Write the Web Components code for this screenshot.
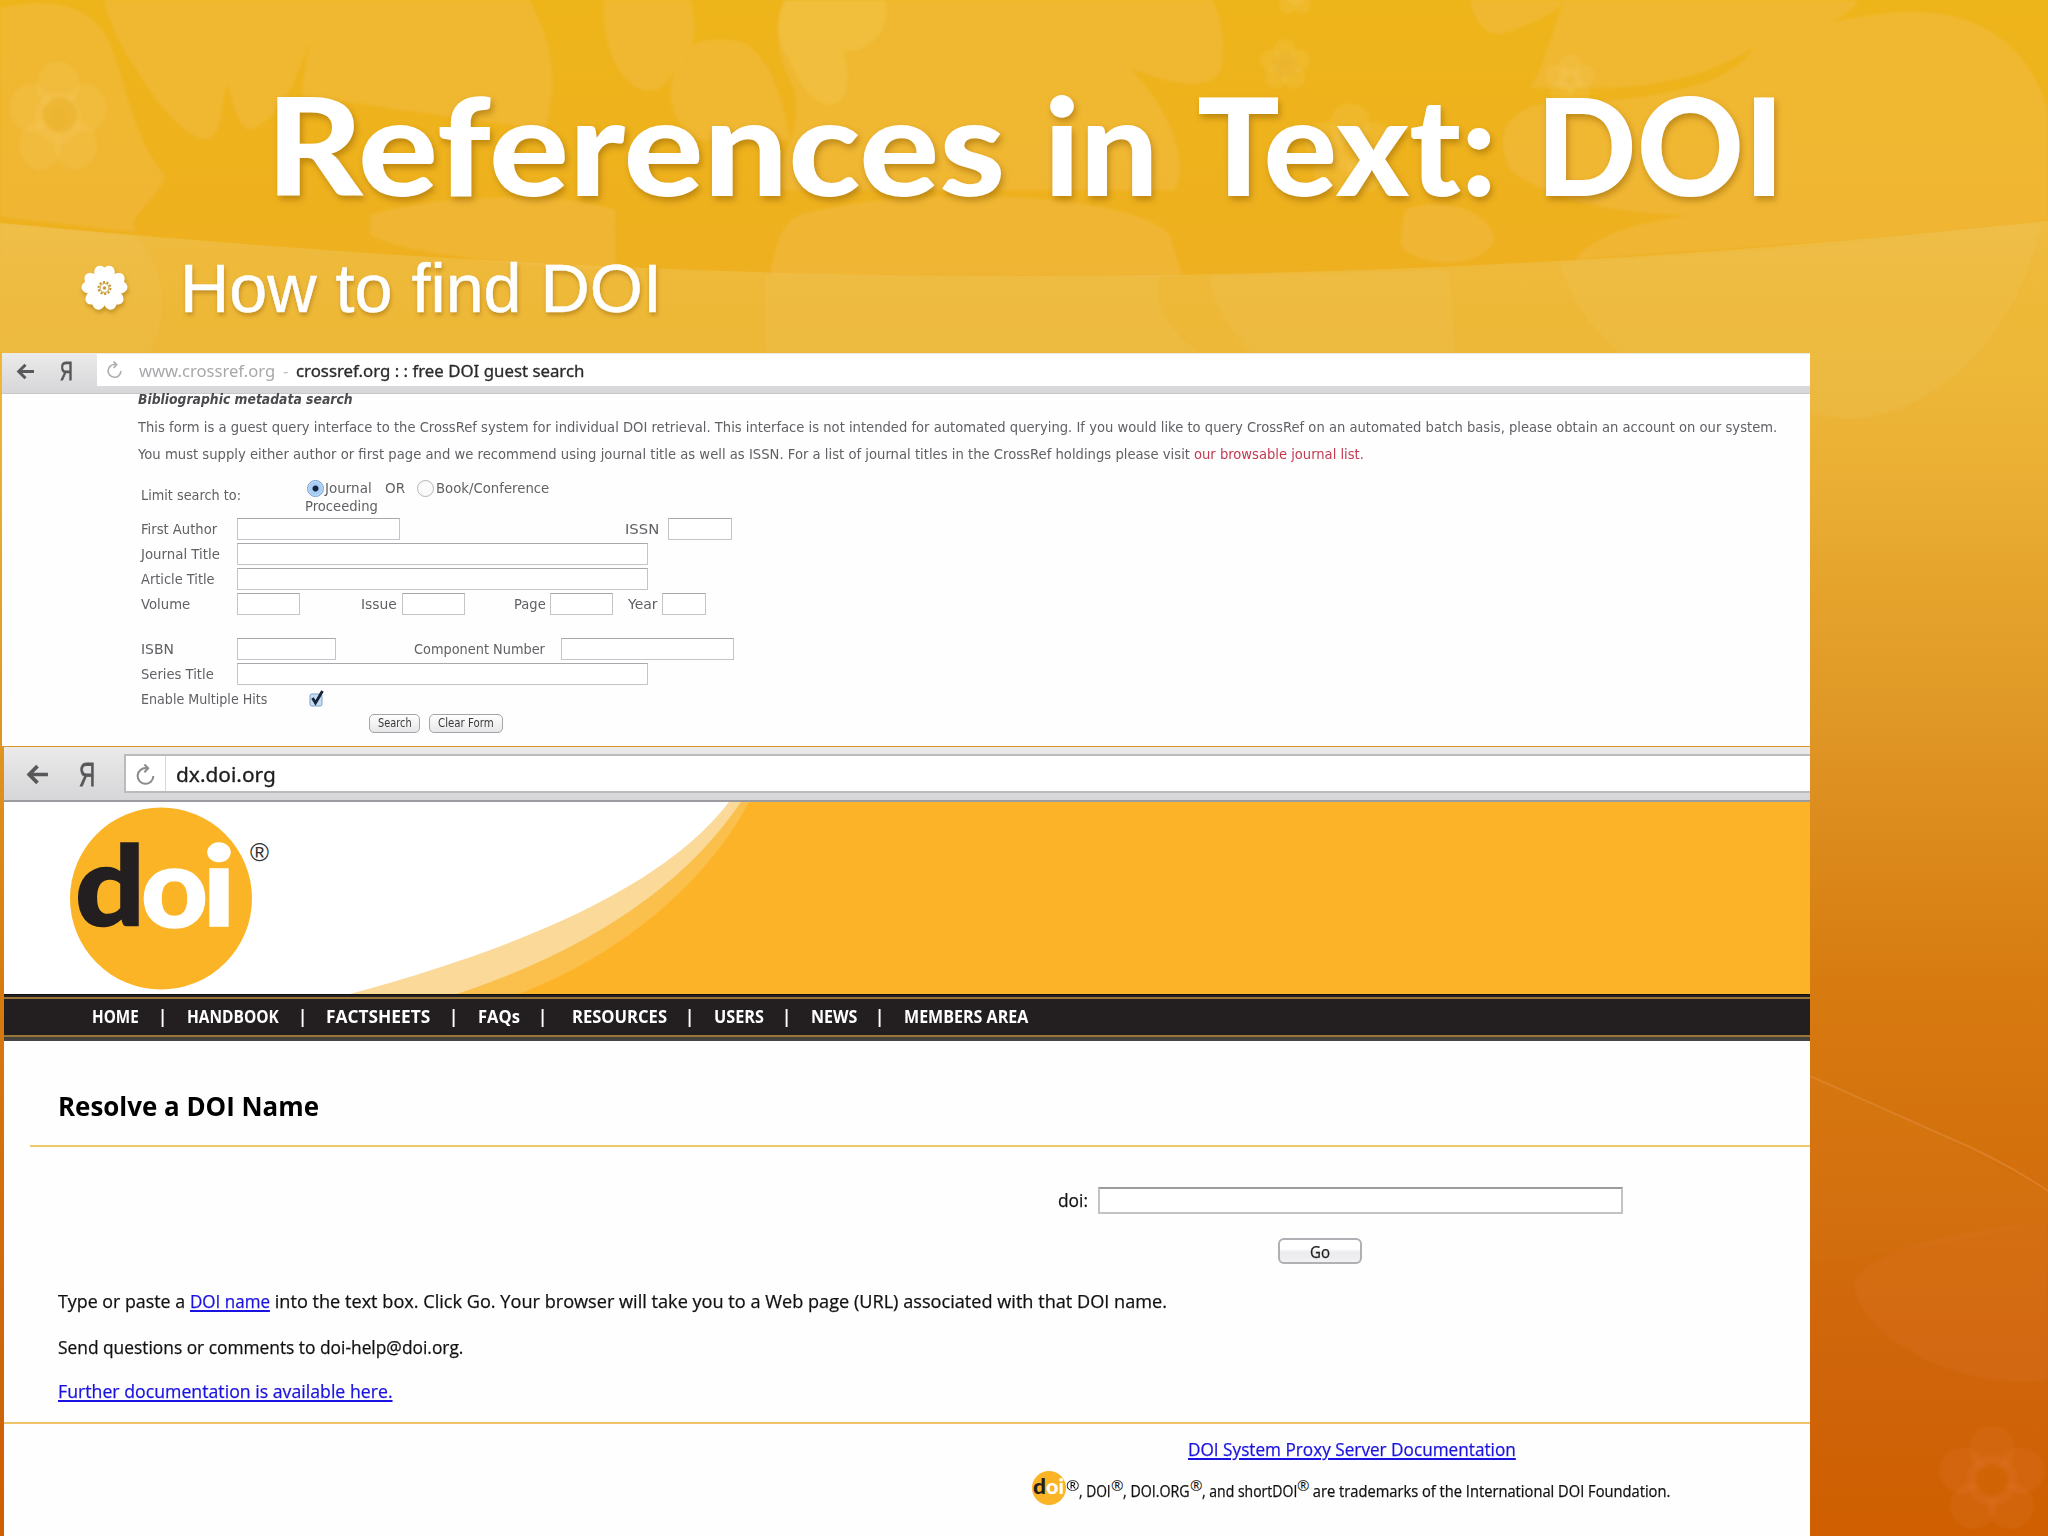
<!DOCTYPE html>
<html lang="en">
<head>
    <meta charset="UTF-8" />
    <meta name="viewport" content="width=device-width, initial-scale=1.0" />
    <title>References in Text: DOI</title>
    <style>
        body {
            margin: 0;
            overflow: hidden;
            font-family: "Open Sans", sans-serif;
        }
    </style>
</head>

<body>
<slide-page>
    <slide-title slot="title">
        <fit-text w="739">References</fit-text>
        <fit-text w="114">in</fit-text>
        <fit-text w="300">Text:</fit-text>
        <fit-text w="248">DOI</fit-text>
    </slide-title>
    <slide-bullet slot="bullet"><fit-text w="482">How to find DOI</fit-text></slide-bullet>

    <browser-shot class="crossref">
        <address-bar slot="bar" class="small">
            <fit-text w="136" style="color:#a9a7aa">www.crossref.org</fit-text>
            <span style="color:#bbb; width:21px; text-align:center">-</span>
            <fit-text w="288" style="-webkit-text-stroke:.3px">crossref.org : : free DOI guest search</fit-text>
        </address-bar>
        <crossref-form></crossref-form>
    </browser-shot>

    <browser-shot class="doi">
        <address-bar slot="bar" class="large"><fit-text w="100">dx.doi.org</fit-text></address-bar>
        <doi-banner></doi-banner>
        <doi-nav></doi-nav>
        <doi-resolver></doi-resolver>
        <doi-footer></doi-footer>
    </browser-shot>
</slide-page>

<script type="module">
    class Base extends HTMLElement {
        constructor() {
            super();
            this.attachShadow({ mode: 'open' });
            this.shadowRoot.innerHTML = this.render();
        }
    }

    // one line of text stretched to a given width
    class FitText extends Base {
        render() {
            return `
                <style>
                    :host { display: block; white-space: nowrap; flex: none; }
                    span { display: inline-block; transform-origin: 0 50%; }
                </style>
                <span><slot></slot></span>`;
        }

        connectedCallback() {
            const w = Number(this.getAttribute('w'));
            const span = this.shadowRoot.querySelector('span');
            this.style.width = w + 'px';
            const natural = span.offsetWidth;
            if (natural) span.style.transform = `scaleX(${w / natural})`;
        }
    }

    class SlidePage extends Base {
        render() {
            return `
                <style>
                    :host { display: block; position: relative; width: 2048px; height: 1536px; overflow: hidden; }
                    .bg { position: absolute; inset: 0; }
                    .soft { filter: blur(1.5px); }
                    main { position: relative; display: flex; flex-direction: column; }
                </style>
                <svg class="bg" width="2048" height="1536" viewBox="0 0 2048 1536">
                    <defs>
                        <linearGradient id="g" x1="0" y1="0" x2="0" y2="1">
                            <stop offset="0" stop-color="#eeb51a"/>
                            <stop offset=".17" stop-color="#eeb01f"/>
                            <stop offset=".24" stop-color="#ecb22c"/>
                            <stop offset=".34" stop-color="#e8a92f"/>
                            <stop offset=".44" stop-color="#e19c28"/>
                            <stop offset=".54" stop-color="#dc8b1d"/>
                            <stop offset=".64" stop-color="#d77b10"/>
                            <stop offset=".78" stop-color="#d26e0c"/>
                            <stop offset=".9" stop-color="#cf640a"/>
                            <stop offset="1" stop-color="#cf5f00"/>
                        </linearGradient>
                        <linearGradient id="band" x1="0" y1="0" x2="0" y2="1">
                            <stop offset="0" stop-color="#f0d080" stop-opacity=".36"/>
                            <stop offset=".12" stop-color="#f0c860" stop-opacity=".3"/>
                            <stop offset=".45" stop-color="#f0c860" stop-opacity="0"/>
                        </linearGradient>
                        <g id="flower">
                            <circle cx="0" cy="-30" r="22"/><circle cx="28" cy="-9" r="22"/>
                            <circle cx="18" cy="25" r="22"/><circle cx="-18" cy="25" r="22"/>
                            <circle cx="-28" cy="-9" r="22"/><circle r="24"/>
                        </g>
                    </defs>
                    <rect width="2048" height="1536" fill="url(#g)"/>
                    <g class="soft" fill="#f3bf5a" fill-opacity=".36">
                        <path d="M0 8C60 -5 88 10 104 32C125 70 132 140 165 175C160 200 125 215 136 232L0 217Z"/>
                        <path d="M104 0C112 35 130 60 140 75C160 110 190 140 208 140C225 132 220 100 228 84C232 105 240 128 250 130C280 120 300 75 309 40C306 70 300 90 303 96L545 130C565 60 540 25 530 0Z"/>
                        <path d="M604 0C600 45 620 88 648 91C670 90 668 75 690 48C698 35 695 15 690 0Z"/>
                        <path d="M690 48C665 70 660 120 700 140L790 140C780 80 765 60 752 48C745 38 700 35 690 48Z"/>
                        <path d="M785 0C772 30 778 60 795 90C800 120 790 160 760 190H1175C1190 160 1170 110 1130 68C1170 84 1215 95 1222 65C1226 30 1218 10 1212 0Z"/>
                        <path d="M1470 0C1475 28 1492 36 1502 34C1530 25 1560 12 1564 0Z"/>
                        <path d="M1564 0C1548 45 1540 75 1530 88L1610 88C1680 85 1730 65 1755 46C1735 80 1680 96 1590 102C1510 95 1490 130 1510 170C1570 215 1680 215 1690 215C1620 225 1590 240 1575 260C1700 250 1900 240 2048 221L2048 110C2030 50 1985 8 1900 12C1860 15 1835 22 1830 22C1850 15 1856 5 1858 0Z"/>
                        <path d="M370 215C430 195 560 190 615 210L616 270C500 265 390 250 370 235Z"/>
                        <path d="M800 215C900 185 1130 190 1170 235L1182 276L770 275C775 240 785 220 800 215Z"/>
                        <path d="M1405 210C1440 195 1490 210 1495 240C1480 275 1400 265 1400 240Z"/>
                    </g>
                    <g class="soft" fill="#f3cc58" fill-opacity=".32">
                        <path d="M785 0C772 20 778 48 790 60C798 90 830 122 845 95C852 75 845 60 843 52C880 50 892 20 885 0Z"/>
                    </g>
                    <g class="soft" fill="#f3cc68" fill-opacity=".2">
                        <use href="#flower" transform="translate(58 118) scale(.98 1.1)"/>
                        <use href="#flower" transform="translate(1285 65) scale(.5)"/>
                        <use href="#flower" transform="translate(1295 -5) scale(.4)"/>
                        <use href="#flower" transform="translate(1350 150) scale(.9)"/>
                        <use href="#flower" transform="translate(1570 80) scale(.5)"/>
                    </g>
                    <g class="soft" fill="#eab02a" fill-opacity=".6">
                        <circle cx="60" cy="115" r="17"/><circle cx="1285" cy="65" r="12"/>
                    </g>
                    <path fill="url(#band)" d="M0 223C420 263 760 277 1050 276C1450 274 1750 252 2048 221V1000H0Z"/>
                    <g class="soft" fill="#f4cf78" fill-opacity=".15">
                        <path d="M0 223L136 236C165 270 170 310 150 352H0Z"/>
                        <path d="M765 275L1160 276C1150 310 1180 340 1200 352H765Z"/>
                        <path d="M1210 276L1450 270L1455 352H1250C1230 330 1210 300 1210 276Z"/>
                        <path d="M1560 262C1750 252 1900 240 2042 222C2020 330 1940 415 1850 419L1700 400C1620 370 1570 310 1560 262Z"/>
                    </g>
                    <path d="M1810 1076L1947 1137C1990 1155 2020 1172 2048 1191" fill="none" stroke="#e08a35" stroke-width="2" stroke-opacity=".6"/>
                    <path d="M1810 1077L1947 1139L2048 1192V1222C1960 1240 1850 1262 1810 1262Z" fill="#e08a35" fill-opacity=".08"/>
                    <g class="soft" fill="#e07830" fill-opacity=".2">
                        <path d="M1855 1282C1860 1255 1950 1230 2048 1222V1380C1960 1395 1850 1330 1855 1282Z"/>
                        <use href="#flower" transform="translate(1992 1480) scale(1.05)"/>
                    </g>
                    <circle class="soft" cx="1992" cy="1480" r="16" fill="#cf6200" fill-opacity=".7"/>
                </svg>
                <main>
                    <slot name="title"></slot>
                    <slot name="bullet"></slot>
                    <slot></slot>
                </main>`;
        }
    }

    class SlideTitle extends Base {
        render() {
            return `
                <style>
                    :host {
                        display: flex; box-sizing: border-box; height: 224px; padding: 64px 0 0 266px; gap: 39px;
                        font: 900 136px/160px Lato, "Open Sans", sans-serif; color: #fff;
                        text-shadow: 2px 4px 6px rgba(130, 85, 0, .45);
                    }
                </style>
                <slot></slot>`;
        }
    }

    class SlideBullet extends Base {
        render() {
            return `
                <style>
                    :host {
                        display: flex; align-items: center; box-sizing: border-box; height: 128px; padding: 0 0 0 81px; gap: 52px;
                        font: 68px/80px "Liberation Sans", sans-serif; color: #fff;
                        -webkit-text-stroke: .5px #fff;
                        text-shadow: 1px 3px 4px rgba(130, 85, 0, .45);
                    }
                    svg { filter: drop-shadow(1px 3px 2px rgba(130, 85, 0, .4)); }
                </style>
                <svg width="47" height="48" viewBox="-23.500 -24 47 48">
                    <g fill="#fff">
                        <g id="p"><path d="M-5 0C-7 -8 -13 -14 -9 -20C-7 -23 -3 -23 0 -20.500C3 -23 7 -23 9 -20C13 -14 7 -8 5 0Z"/></g>
                        <use href="#p" transform="rotate(72)"/><use href="#p" transform="rotate(144)"/>
                        <use href="#p" transform="rotate(216)"/><use href="#p" transform="rotate(288)"/>
                        <circle r="10"/>
                    </g>
                    <circle r="6" fill="none" stroke="#c99a35" stroke-width="2" stroke-dasharray="2.200 1.500"/>
                    <circle r="4.500" fill="none" stroke="#c99a35" stroke-width="1"/>
                    <circle r="1.800" fill="#c99a35"/>
                </svg>
                <slot></slot>`;
        }
    }

    class BrowserShot extends Base {
        render() {
            return `
                <style>
                    :host { display: block; box-sizing: border-box; background: #fefefe; overflow: hidden; }
                    :host(.crossref) { height: 393px; width: 1808px; margin: 1px 0 1px 2px; }
                    :host(.doi) { height: 789px; width: 1806px; margin-left: 4px; }
                </style>
                <slot name="bar"></slot>
                <slot></slot>`;
        }
    }

    class AddressBar extends Base {
        render() {
            return `
                <style>
                    :host { display: flex; box-sizing: border-box; background: linear-gradient(#ebebeb, #d6d5d7); color: #2b2a2c; }
                    :host(.small) { height: 41px; padding: 1px 0 7px; border-bottom: 1px solid #c9c8cb; font: 16px/22px "Noto Sans", sans-serif; }
                    :host(.large) { height: 55px; padding: 7px 0; border-bottom: 2px solid #9c9ca0; font: 19px/26px "Noto Sans", sans-serif; color: #1d1d1d; -webkit-text-stroke: .3px; }
                    nav { display: flex; align-items: center; box-sizing: border-box; flex: none; color: #58575a; }
                    :host(.small) nav { width: 95px; padding: 2px 0 0 14px; gap: 25px; }
                    :host(.large) nav { width: 120px; padding: 2px 0 0 22px; gap: 30px; }
                    .field { flex: 1; display: flex; align-items: center; background: #fff; box-sizing: border-box; padding-top: 1px; }
                    :host(.large) .field { border: 2px solid #bbbbbe; border-right: 0; padding-top: 2px; }
                    .reload { display: flex; align-items: center; justify-content: center; box-sizing: border-box; align-self: stretch; }
                    :host(.small) .reload { width: 42px; padding-right: 8px; margin-right: 0; }
                    :host(.large) .reload { width: 40px; border-right: 1px solid #d8d8d8; margin: -2px 10px 0 0; padding-top: 3px; }
                    :host(.small) .back { width: 19px; height: 17px; }
                    :host(.large) .back { width: 23px; height: 21px; }
                    :host(.small) .reload svg { width: 17px; height: 19px; opacity: .7; }
                    :host(.large) .reload svg { width: 21px; height: 23px; }
                    .ya { font-family: "Liberation Sans", sans-serif; -webkit-text-stroke: .8px; transform: scaleX(.68); transform-origin: 0 50%; }
                    :host(.small) .ya { font-size: 26px; }
                    :host(.large) .ya { font-size: 33px; line-height: 33px; }
                </style>
                <nav>
                    <svg class="back" viewBox="0 0 22 20" fill="none" stroke="currentColor" stroke-width="3.500"><path d="M21 10H3M11 2L3 10L11 18"/></svg>
                    <span class="ya">Я</span>
                </nav>
                <div class="field">
                    <div class="reload">
                        <svg viewBox="0 0 20 22" fill="none" stroke="#8d8d90" stroke-width="2"><path d="M11 4A7.500 7.500 0 1 0 17.500 11.500M9 .5L12.500 4L9 8"/></svg>
                    </div>
                    <slot></slot>
                </div>`;
        }
    }

    class CrossrefForm extends Base {
        render() {
            return `
                <style>
                    :host { display: block; padding-left: 136px; font: 13.500px/19px "DejaVu Sans", sans-serif; color: #626065; }
                    .head { font-weight: 700; font-style: italic; line-height: 10px; height: 12px; color: #4c4a4e; }
                    .line { display: flex; margin-top: 12px; }
                    .line + .line { margin-top: 8px; }
                    .red { color: #c23a50; }
                    .rows { display: flex; flex-direction: column; gap: 3px; padding-left: 3px; margin-top: 15px; }
                    .row { display: grid; align-items: center; height: 22px; }
                    .limit { height: 36px; align-items: start; grid-template-columns: 164px auto; }
                    .opts { display: flex; align-items: center; height: 18px; padding-left: 2px; }
                    .radio { width: 17px; height: 17px; border-radius: 50%; box-sizing: border-box; border: 1px solid #b5b3b9; background: #fafafa; }
                    .on { border-color: #6f9bd0; background: radial-gradient(circle, #14243c 0 2.500px, #a7cdf5 3.500px 6px, #dcebfa 8px); }
                    i { display: block; box-sizing: border-box; height: 22px; margin: 0 1px 0 -1px; border: 1.500px solid #c6c4c9; border-top-color: #a9a7ac; background: #fff; }
                    .btns { display: flex; gap: 9px; padding-left: 228px; margin-top: 1px; }
                    button { box-sizing: border-box; height: 19px; padding: 0; border: 1px solid #a6a4a8; border-radius: 5px; background: linear-gradient(#fff, #e6e6e8); font: 11.500px/17px "DejaVu Sans", sans-serif; color: #39373b; display: flex; justify-content: center; }
                </style>
                <div class="head"><fit-text w="215">Bibliographic metadata search</fit-text></div>
                <div class="line"><fit-text w="1639">This form is a guest query interface to the CrossRef system for individual DOI retrieval. This interface is not intended for automated querying. If you would like to query CrossRef on an automated batch basis, please obtain an account on our system.</fit-text></div>
                <div class="line">
                    <fit-text w="1056">You must supply either author or first page and we recommend using journal title as well as ISSN. For a list of journal titles in the CrossRef holdings please visit&nbsp;</fit-text>
                    <fit-text w="170" class="red">our browsable journal list.</fit-text>
                </div>
                <div class="rows">
                    <div class="row limit">
                        <fit-text w="100" style="margin-top:7px">Limit search to:</fit-text>
                        <div>
                            <div class="opts">
                                <span class="radio on"></span><fit-text w="47" style="margin-left:1px">Journal</fit-text>
                                <fit-text w="20" style="margin:0 12px 0 13px">OR</fit-text>
                                <span class="radio"></span><fit-text w="113" style="margin-left:2px">Book/Conference</fit-text>
                            </div>
                            <fit-text w="73">Proceeding</fit-text>
                        </div>
                    </div>
                    <div class="row" style="grid-template-columns:97px 163px 224px 44px 64px">
                        <fit-text w="76">First Author</fit-text><i></i><span></span><fit-text w="34">ISSN</fit-text><i></i>
                    </div>
                    <div class="row" style="grid-template-columns:97px 411px"><fit-text w="79">Journal Title</fit-text><i></i></div>
                    <div class="row" style="grid-template-columns:97px 411px"><fit-text w="74">Article Title</fit-text><i></i></div>
                    <div class="row" style="grid-template-columns:97px 63px 60px 42px 63px 48px 37px 63px 14px 35px 44px; margin-bottom:20px">
                        <fit-text w="49">Volume</fit-text><i></i><span></span>
                        <fit-text w="36">Issue</fit-text><i></i><span></span>
                        <fit-text w="32">Page</fit-text><i></i><span></span>
                        <fit-text w="30">Year</fit-text><i></i>
                    </div>
                    <div class="row" style="grid-template-columns:97px 99px 77px 148px 173px">
                        <fit-text w="33">ISBN</fit-text><i></i><span></span><fit-text w="131">Component Number</fit-text><i></i>
                    </div>
                    <div class="row" style="grid-template-columns:97px 411px"><fit-text w="73">Series Title</fit-text><i></i></div>
                    <div class="row" style="grid-template-columns:167px 20px">
                        <fit-text w="126">Enable Multiple Hits</fit-text>
                        <svg width="17" height="20" viewBox="0 0 17 20">
                            <rect x="2" y="5" width="12" height="12" rx="2" fill="#c6dcf5" stroke="#7f9fc6"/>
                            <path d="M4.500 9L7.500 14L14.500 2" fill="none" stroke="#18243c" stroke-width="2.800"/>
                        </svg>
                    </div>
                    <div class="btns">
                        <button style="width:51px"><fit-text w="34">Search</fit-text></button>
                        <button style="width:74px"><fit-text w="56">Clear Form</fit-text></button>
                    </div>
                </div>`;
        }
    }

    class DoiBanner extends Base {
        render() {
            return `
                <style>
                    :host { display: block; height: 192px; background: #fff; }
                    svg { display: block; }
                    .logo { font-family: Lato, "Open Sans", sans-serif; font-weight: 900; stroke-width: 1.5px; }
                    .reg { font-family: "Liberation Sans", sans-serif; }
                </style>
                <svg width="1806" height="192" viewBox="4 802 1806 192">
                    <path fill="#fad999" d="M729 802C665 885 530 945 350 994H1810V802Z"/>
                    <path fill="#fbbf4c" d="M741 802C685 885 590 950 457 994H1810V802Z"/>
                    <path fill="#fdb328" d="M749 802C705 885 620 955 519 994H1810V802Z"/>
                    <circle cx="161" cy="898.500" r="91" fill="#fcb427"/>
                    <g class="logo" font-size="110">
                        <text x="75" y="926" textLength="70" lengthAdjust="spacingAndGlyphs" fill="#231f20" stroke="#231f20">d</text>
                        <text x="141" y="926.500" textLength="67" lengthAdjust="spacingAndGlyphs" fill="#fff" stroke="#fff">o</text>
                        <text x="202.500" y="926" textLength="33" lengthAdjust="spacingAndGlyphs" fill="#fff" stroke="#fff">i</text>
                    </g>
                    <text class="reg" x="250" y="860.500" font-size="25" textLength="19" lengthAdjust="spacingAndGlyphs" fill="#333">®</text>
                </svg>`;
        }
    }

    class DoiNav extends Base {
        render() {
            // label, left edge, width
            const items = [['HOME', 92, 47], ['|', 158, 9], ['HANDBOOK', 187, 92], ['|', 298, 9], ['FACTSHEETS', 326, 104], ['|', 449, 9], ['FAQs', 478, 42], ['|', 538, 9],
                ['RESOURCES', 572, 95], ['|', 685, 9], ['USERS', 714, 50], ['|', 782, 9], ['NEWS', 811, 46], ['|', 875, 9], ['MEMBERS AREA', 904, 124]];
            let x = 4;
            const html = items.map(([label, left, w]) => {
                const gap = left - x;
                x = left + w;
                return `<fit-text w="${w}" style="margin-left:${gap}px">${label}</fit-text>`;
            }).join('');
            return `
                <style>
                    :host { display: block; background: #231f20; border-top: 1px solid #111; color: #fff; }
                    div { display: flex; height: 36px; margin-top: 2px; border: solid #9a7538; border-width: 2px 0; font: 700 18.500px/34px "Open Sans", sans-serif; }
                    footer { height: 4px; background: #46423f; }
                </style>
                <div>${html}</div><footer></footer>`;
        }
    }

    class DoiResolver extends Base {
        render() {
            return `
                <style>
                    :host { display: block; box-sizing: border-box; height: 383px; border-bottom: 2px solid #f0c368; font-size: 18.500px; line-height: 26px; color: #111; -webkit-text-stroke: .25px; }
                    h1 { margin: 0; padding: 46px 0 0 54px; font: 700 27px/38px "Open Sans", sans-serif; color: #000; -webkit-text-stroke: 0; }
                    hr { margin: 20px 0 0 26px; border: 0; height: 2px; background: #ecca68; }
                    .doi { display: flex; align-items: center; height: 27px; margin: 40px 0 24px 1054px; gap: 10px; }
                    .doi fit-text { margin-top: -2px; }
                    input { box-sizing: border-box; width: 525px; height: 27px; padding: 0; border: 2px solid #c3c3c5; border-top-color: #9b9b9e; background: #fff; }
                    button { display: flex; justify-content: center; box-sizing: border-box; width: 84px; height: 26px; margin-left: 1274px; padding: 0; border: 2px solid #b0b0b4; border-radius: 6px; background: linear-gradient(#fff 40%, #ebebee 55%, #f1f1f3); font: 16.500px/24px "Open Sans", sans-serif; color: #1b1b1b; }
                    p { display: flex; margin: 0 0 0 54px; }
                    a { color: #1a12e0; text-decoration: underline; text-decoration-thickness: 2px; text-underline-offset: 2px; }
                </style>
                <h1><fit-text w="261">Resolve a DOI Name</fit-text></h1>
                <hr>
                <div class="doi"><fit-text w="30">doi:</fit-text><input></div>
                <button><fit-text w="20">Go</fit-text></button>
                <p style="margin-top:24px"><fit-text w="132">Type or paste a&nbsp;</fit-text><fit-text w="80"><a>DOI name</a></fit-text><fit-text w="897">&nbsp;into the text box. Click Go. Your browser will take you to a Web page (URL) associated with that DOI name.</fit-text></p>
                <p style="margin-top:20px"><fit-text w="405">Send questions or comments to doi-help@doi.org.</fit-text></p>
                <p style="margin-top:18px"><fit-text w="335"><a>Further documentation is available here.</a></fit-text></p>`;
        }
    }

    class DoiFooter extends Base {
        render() {
            return `
                <style>
                    :host { display: block; padding-top: 12px; font-size: 18.500px; line-height: 26px; color: #111; -webkit-text-stroke: .25px; }
                    a { color: #1a12e0; text-decoration: underline; text-decoration-thickness: 2px; text-underline-offset: 2px; }
                    .link { margin-left: 1184px; }
                    .marks { display: flex; align-items: center; height: 34px; margin: 9px 0 0 1028px; font-size: 15.500px; line-height: 22px; }
                    .marks fit-text { margin-top: 6px; }
                    .marks .r { margin-top: -6px; font-size: 15px; -webkit-text-stroke: 0; }
                    svg { flex: none; }
                </style>
                <div class="link"><fit-text w="328"><a>DOI System Proxy Server Documentation</a></fit-text></div>
                <div class="marks">
                    <svg width="34" height="34" viewBox="0 0 34 34" font-family="Lato, sans-serif" font-weight="900" font-size="21">
                        <circle cx="17" cy="17" r="17" fill="#fcb427"/>
                        <text x="1" y="22.500" fill="#231f20" textLength="13" lengthAdjust="spacingAndGlyphs">d</text>
                        <text x="14" y="22.500" fill="#fff" textLength="18" lengthAdjust="spacingAndGlyphs">oi</text>
                    </svg>
                    <fit-text class="r" w="13">®</fit-text><fit-text w="32">, DOI</fit-text>
                    <fit-text class="r" w="12">®</fit-text><fit-text w="67">, DOI.ORG</fit-text>
                    <fit-text class="r" w="12">®</fit-text><fit-text w="95">, and shortDOI</fit-text>
                    <fit-text class="r" w="12">®</fit-text><fit-text w="361">&nbsp;are trademarks of the International DOI Foundation.</fit-text>
                </div>`;
        }
    }

    // containers first, so the text is measured with its final font
    customElements.define('slide-page', SlidePage);
    customElements.define('slide-title', SlideTitle);
    customElements.define('slide-bullet', SlideBullet);
    customElements.define('browser-shot', BrowserShot);
    customElements.define('address-bar', AddressBar);
    customElements.define('crossref-form', CrossrefForm);
    customElements.define('doi-banner', DoiBanner);
    customElements.define('doi-nav', DoiNav);
    customElements.define('doi-resolver', DoiResolver);
    customElements.define('doi-footer', DoiFooter);
    customElements.define('fit-text', FitText);
</script>
</body>
</html>
